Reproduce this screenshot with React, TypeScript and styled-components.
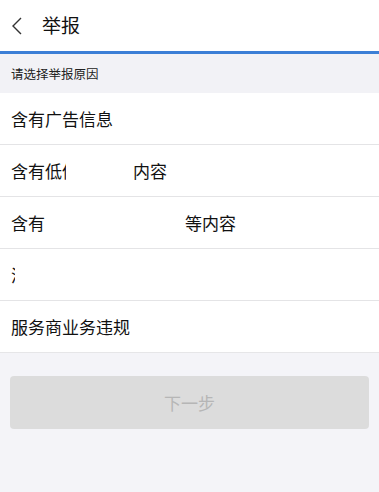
import styled, { createGlobalStyle } from 'styled-components';

const GlobalStyle = createGlobalStyle`
  html, body {
    margin: 0;
    padding: 0;
    background: #f4f4f8;
  }
  body {
    font-family: 'Noto Sans CJK SC', 'Liberation Sans', sans-serif;
    color: #111;
  }
`;

// masked parts of the reference are kept as blank gaps / clipped glyphs
const reasons: { parts: { text?: string; clip?: number; gap?: number }[] }[] = [
  { parts: [{ text: '含有广告信息' }] },
  { parts: [{ text: '含有低' }, { text: '俗', clip: 4 }, { gap: 67 }, { text: '内容' }] },
  { parts: [{ text: '含有' }, { gap: 140 }, { text: '等内容' }] },
  { parts: [{ text: '涉', clip: 4 }] },
  { parts: [{ text: '服务商业务违规' }] },
];

function App() {
  return (
    <>
      <GlobalStyle />
      <Page>
        <Header>
          <BackIcon viewBox='0 0 12 18' width={12} height={18}>
            <path d='M10 1 L2 9 L10 17' fill='none' stroke='#333' strokeWidth={1.4} />
          </BackIcon>
          <Title>举报</Title>
        </Header>
        <SectionLabel>请选择举报原因</SectionLabel>
        <List>
          {reasons.map((r, i) => (
            <Row key={i}>
              {r.parts.map((p, j) =>
                p.gap ? (
                  <Blank key={j} $w={p.gap} />
                ) : (
                  <Piece key={j} $clip={p.clip}>
                    {p.text}
                  </Piece>
                )
              )}
            </Row>
          ))}
        </List>
        <Footer>
          <NextButton disabled>下一步</NextButton>
        </Footer>
      </Page>
    </>
  );
}

const Page = styled.div`
  width: 379px;
  min-height: 492px;
  background: #f4f4f8;
`;

const Header = styled.div`
  height: 51px;
  background: #fff;
  border-bottom: 3px solid #3c7fd6;
  display: flex;
  align-items: center;
  padding-left: 11px;
`;

const BackIcon = styled.svg`
  display: block;
  margin-right: 19px;
`;

const Title = styled.div`
  font-size: 19px;
  line-height: 1;
  color: #111;
  margin-top: -2px;
`;

const SectionLabel = styled.div`
  height: 39px;
  display: flex;
  align-items: center;
  padding-left: 11px;
  font-size: 12.5px;
  color: #222;
  background: #f2f2f6;
`;

const List = styled.div`
  background: #fff;
  border-bottom: 1px solid #e6e6e8;
`;

const Row = styled.div`
  height: 51px;
  display: flex;
  align-items: center;
  padding-left: 11px;
  font-size: 17px;
  color: #111;

  & + & {
    border-top: 1px solid #e4e4e6;
  }
`;

const Piece = styled.span<{ $clip?: number }>`
  display: inline-block;
  white-space: nowrap;
  overflow: hidden;
  width: ${({ $clip }) => ($clip ? `${$clip}px` : 'auto')};
`;

const Blank = styled.span<{ $w: number }>`
  display: inline-block;
  width: ${({ $w }) => $w}px;
`;

const Footer = styled.div`
  padding: 23px 10px 0;
`;

const NextButton = styled.button`
  width: 100%;
  height: 53px;
  border: none;
  border-radius: 4px;
  background: #dcdcdc;
  color: #b6b6b6;
  font-family: 'Noto Sans CJK SC', 'Liberation Sans', sans-serif;
  font-size: 17px;
  cursor: default;
`;

export default App;
